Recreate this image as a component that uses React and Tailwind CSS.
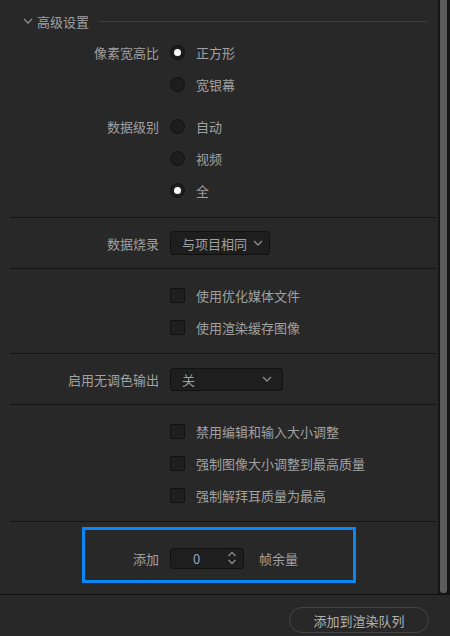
import React from "react";

const font = { fontFamily: '"Noto Sans CJK SC", "Noto Sans", sans-serif' };

function Divider() {
  return <div className="h-px bg-[#141414] ml-[10px] mr-[2px]" />;
}

function Row({ label, children, className = "" }) {
  return (
    <div className={"flex items-center h-[32px] " + className}>
      <div className="w-[159px] text-right text-[13px] text-[#a0a0a0] leading-none">{label}</div>
      <div className="ml-[11px] flex items-center">{children}</div>
    </div>
  );
}

function Radio({ checked, text }) {
  return (
    <div className="flex items-center">
      <div className="w-[15px] h-[15px] rounded-full bg-[#1d1d1d] border border-[#121212] flex items-center justify-center">
        {checked && <div className="w-[7px] h-[7px] rounded-full bg-white" />}
      </div>
      <span className="ml-[11px] text-[13px] text-[#a0a0a0] leading-none">{text}</span>
    </div>
  );
}

function Check({ text }) {
  return (
    <div className="flex items-center">
      <div className="w-[15px] h-[15px] rounded-[2px] bg-[#1f1f1f] border border-[#121212]" />
      <span className="ml-[11px] text-[13px] text-[#a0a0a0] leading-none">{text}</span>
    </div>
  );
}

function Chevron({ className = "" }) {
  return (
    <svg width="10" height="6" viewBox="0 0 10 6" className={className}>
      <path d="M1 1 L5 5 L9 1" fill="none" stroke="#8a8a8a" strokeWidth="1.4" />
    </svg>
  );
}

export default function App() {
  return (
    <div className="w-[450px] h-[636px] bg-[#282828] flex flex-col overflow-hidden" style={font}>
      <div className="h-[594px] flex">
        <div className="flex-1 flex flex-col relative">
          {/* header */}
          <div className="mt-[10px] h-[22px] flex items-center">
            <svg width="10" height="6" viewBox="0 0 10 6" className="ml-[23px]">
              <path d="M1 1 L5 5 L9 1" fill="none" stroke="#8c8c8c" strokeWidth="1.3" />
            </svg>
            <span className="ml-[4px] text-[13px] text-[#a0a0a0] leading-none">高级设置</span>
            <div className="ml-[10px] w-[328px] h-px bg-[#3d3d3d]" />
          </div>

          <div className="mt-[4px]">
            <Row label="像素宽高比"><Radio checked text="正方形" /></Row>
            <Row label=""><Radio text="宽银幕" /></Row>
          </div>
          <div className="mt-[10px] mb-[11px]">
            <Row label="数据级别"><Radio text="自动" /></Row>
            <Row label=""><Radio text="视频" /></Row>
            <Row label=""><Radio checked text="全" /></Row>
          </div>
          <Divider />
          <div className="py-[9px]">
            <Row label="数据烧录">
              <div className="w-[100px] h-[24px] bg-[#1e1e1e] border border-[#111] rounded-[3px] flex items-center pl-[11px]">
                <span className="text-[13px] text-[#a0a0a0] leading-none">与项目相同</span>
                <Chevron className="ml-[6px]" />
              </div>
            </Row>
          </div>
          <Divider />
          <div className="py-[10px]">
            <Row label=""><Check text="使用优化媒体文件" /></Row>
            <Row label=""><Check text="使用渲染缓存图像" /></Row>
          </div>
          <Divider />
          <div className="pt-[9px] pb-[9px]">
            <Row label="启用无调色输出">
              <div className="w-[113px] h-[23px] bg-[#1e1e1e] border border-[#111] rounded-[3px] flex items-center pl-[11px] pr-[10px] justify-between">
                <span className="text-[13px] text-[#a0a0a0] leading-none">关</span>
                <Chevron />
              </div>
            </Row>
          </div>
          <Divider />
          <div className="py-[10px]">
            <Row label=""><Check text="禁用编辑和输入大小调整" /></Row>
            <Row label=""><Check text="强制图像大小调整到最高质量" /></Row>
            <Row label=""><Check text="强制解拜耳质量为最高" /></Row>
          </div>
          <Divider />
          <div className="relative pt-[20px]">
            <div className="flex items-center h-[32px]">
              <div className="w-[159px] text-right text-[13px] text-[#a0a0a0] leading-none">添加</div>
              <div className="ml-[11px] w-[74px] h-[21px] bg-[#1e1e1e] border border-[#111] rounded-[3px] flex items-center">
                <span className="ml-[22px] text-[13px] text-[#8fa6c0] leading-none">0</span>
                <svg width="10" height="14" viewBox="0 0 10 14" className="ml-[27px]">
                  <path d="M1.5 5 L5 1.5 L8.5 5 M1.5 9 L5 12.5 L8.5 9" fill="none" stroke="#8a8a8a" strokeWidth="1.3" />
                </svg>
              </div>
              <span className="ml-[15px] text-[13px] text-[#a0a0a0] leading-none">帧余量</span>
            </div>
            <div className="absolute left-[82px] top-[5px] w-[274px] h-[56px] border-[3px] border-[#0a86f5]" />
          </div>
        </div>
        {/* scrollbar */}
        <div className="w-[12px] bg-[#161616] flex pl-[2px]">
          <div className="w-[7px] h-[593px] bg-[#5c5c5c] rounded-b-[3px]" />
        </div>
      </div>
      <div className="h-px bg-[#111]" />
      <div className="flex-1 flex justify-end items-start pt-[12px] pr-[21px]">
        <div className="w-[140px] h-[26px] rounded-full border border-[#444] flex items-center justify-center text-[13px] text-[#b0b0b0] leading-none">
          添加到渲染队列
        </div>
      </div>
    </div>
  );
}
